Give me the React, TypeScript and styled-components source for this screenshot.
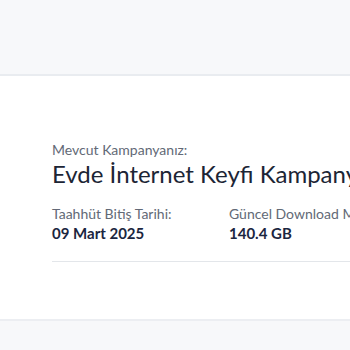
import React from "react";
import styled, { createGlobalStyle } from "styled-components";

const GlobalStyle = createGlobalStyle`
  html, body {
    margin: 0;
    padding: 0;
    background: #f7f8fa;
    font-family: Lato, "Noto Sans", sans-serif;
  }
`;

const Page = styled.div`
  width: 350px;
  height: 350px;
  overflow: hidden;
  display: flex;
  flex-direction: column;
`;

const TopBar = styled.div`
  height: 74px;
  flex-shrink: 0;
  background: #f7f8fa;
  border-bottom: 2px solid #e9ecf0;
`;

const Card = styled.section`
  background: #ffffff;
  height: 245px;
  flex-shrink: 0;
  padding: 65px 0 0 52px;
  box-sizing: border-box;
  border-bottom: 2px solid #eceef2;
`;

const Caption = styled.div`
  font-size: 14px;
  line-height: 18px;
  color: #626976;
  white-space: nowrap;
`;

const Title = styled.h1`
  margin: 0;
  font-size: 24px;
  line-height: 30px;
  font-weight: 400;
  color: #1c2535;
  white-space: nowrap;
`;

const InfoRow = styled.div`
  display: flex;
  margin-top: 16px;
  padding-bottom: 19px;
  border-bottom: 1px solid #e3e6ea;
`;

const InfoCol = styled.div`
  width: 177px;
  flex-shrink: 0;
  display: flex;
  flex-direction: column;
  gap: 1px;
`;

const Value = styled.div`
  font-size: 15px;
  line-height: 18px;
  font-weight: 700;
  color: #1b2640;
  white-space: nowrap;
`;

const Bottom = styled.div`
  flex: 1;
  background: #f7f8fa;
`;

const info = [
  { label: "Taahhüt Bitiş Tarihi:", value: "09 Mart 2025" },
  { label: "Güncel Download Miktarı:", value: "140.4 GB" },
];

export default function App() {
  return (
    <Page>
      <GlobalStyle />
      <TopBar />
      <Card>
        <Caption>Mevcut Kampanyanız:</Caption>
        <Title>Evde İnternet Keyfi Kampanyası</Title>
        <InfoRow>
          {info.map((item) => (
            <InfoCol key={item.label}>
              <Caption>{item.label}</Caption>
              <Value>{item.value}</Value>
            </InfoCol>
          ))}
        </InfoRow>
      </Card>
      <Bottom />
    </Page>
  );
}
